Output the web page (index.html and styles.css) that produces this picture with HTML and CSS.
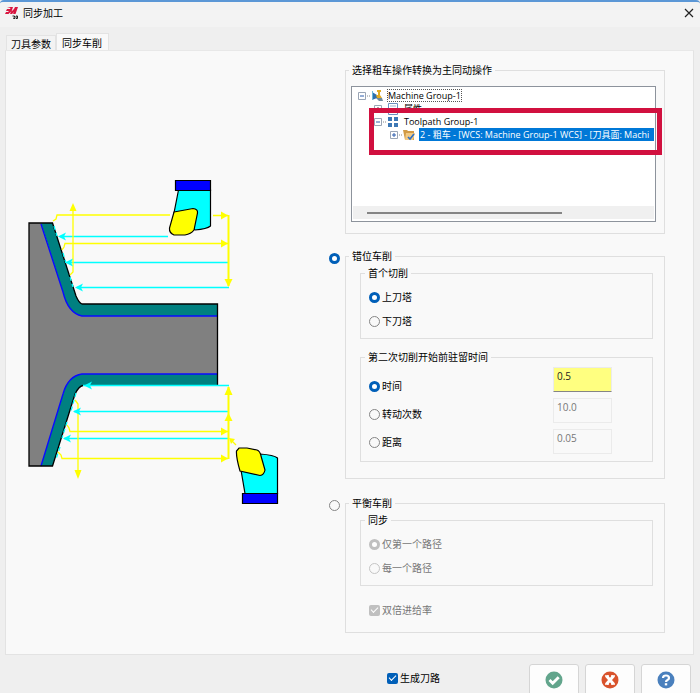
FILE: index.html
```html
<!DOCTYPE html>
<html lang="zh-CN">
<head>
<meta charset="utf-8">
<title>同步加工</title>
<link rel="stylesheet" href="styles.css">
</head>
<body>
<div class="window">
  <header class="titlebar">
    <svg class="logo" width="14" height="14" viewBox="0 0 14 14" aria-hidden="true">
      <path d="M2 1h6L6.500 5.500 9 3l1-2h3L10.500 8H8l1-2-2 2H5l1-2.500L3.500 8H0l1-2h2l1-1H1l1-2h3l.5-1z" fill="#d9153f"/>
      <path d="M7.500 10h2v1l-1 1.500h1.500M11 10h1.500v2.500H11z" fill="none" stroke="#222" stroke-width="1"/>
    </svg>
    <h1 class="title">同步加工</h1>
    <button class="close" type="button" aria-label="关闭">
      <svg width="10" height="10" viewBox="0 0 10 10"><path d="M1 1l8 8M9 1l-8 8" stroke="#222" stroke-width="1.200"/></svg>
    </button>
  </header>

  <nav class="tabs" role="tablist">
    <button class="tab" type="button" role="tab">刀具参数</button>
    <button class="tab tab-active" type="button" role="tab" aria-selected="true">同步车削</button>
  </nav>

  <main class="panel">
    <svg class="diagram" width="290" height="330" viewBox="0 175 290 330" aria-hidden="true">
      <path d="M29 223H41L63 292Q68 313 82 316H217V374H82Q68 376 63 394L41 466H29z" fill="#808080"/>
      <path d="M41 223H52.500L76 296Q79 303 82 304H217V316H82Q68 313 63 292z" fill="#008080"/>
      <path d="M41 466H52.500L75 394Q79 386 83 385.500H217V374H82Q68 376 63 394z" fill="#008080"/>
      <path d="M41 224L63 292Q68 313 82 316H217M217 374H82Q68 376 63 394L41 466" fill="none" stroke="#0a0aff" stroke-width="1.400"/>
      <path d="M83 385.500Q79 386 75 394L52.500 466H29V223H52.500L76 296Q79 303 82 304H217.500V385" fill="none" stroke="#000" stroke-width="1.300"/>
      <g fill="none" stroke="#0ff" stroke-width="1.300">
        <path d="M60 236.500H168M68 262.500H229M77 287.500H229M83 385.500H229M74 411.500H229M64 438.500H229"/>
        <path stroke-dasharray="4 3" d="M54 226l3 10M63 253l3 10M70 277l3 10M76 393l-5 18M67 422l-5 16M60 447l-4 12"/>
      </g>
      <g fill="none" stroke="#ff0" stroke-width="1.300">
        <path d="M53 221l3-2 1-4H170M213 215.500H228M62 250l2-3 1-3.500H228M70 275l3-3V207"/>
        <path d="M75 400l3 4V472M67 425l2 3 1 3.500H228M58 452l3 3 1 3.500H228M236 445l-5-5"/>
      </g>
      <path d="M228.500 215V286M228.500 387V459" stroke="#ff0" stroke-width="2"/>
      <g fill="#ff0">
        <path d="M228 215.500l-7-4v8zM228 243.500l-7-4v8zM228 431.500l-7-4v8zM228 458.500l-7-4v8z"/>
        <path d="M73 203l-3.500 8h7zM78 479l-3.500-9h7zM228.500 287l-4-8h8zM228.500 386l-4 9h8zM228.500 413l-4 8h8zM229 438l6 1-4 5z"/>
      </g>
      <path d="M58 236.500l8-4-2 4 2 4zM65 262.500l8-4-2 4 2 4zM75 287.500l8-4-2 4 2 4zM84 385.500l8-4-2 4 2 4zM73 411.500l8-4-2 4 2 4zM63 438.500l8-4-2 4 2 4z" fill="#0ff"/>
      <g stroke="#000" stroke-width="1.200">
        <path d="M178.500 190H210.500V226Q207 229 195 230L174 213z" fill="#0ff"/>
        <path d="M175.500 180.500H210.500V190.500H175.500z" fill="#00f"/>
        <path d="M174 212L193 208.500Q198 209 197.500 213L194 230Q191 234 185 235H174Q169 233 169.500 228z" fill="#ff0"/>
        <path d="M260 454Q274 455 277.500 458V493.500H245L241 470z" fill="#0ff"/>
        <path d="M242.500 493.500H277.500V503.500H242.500z" fill="#00f"/>
        <path d="M239 448H247L257 450Q260 451 261 456L265 470Q264 475 260 475.500L240 471Q236 457 236.500 451z" fill="#ff0"/>
      </g>
    </svg>

    <form class="options">
      <fieldset class="group source">
        <legend>选择粗车操作转换为主同动操作</legend>
        <div class="tree-frame">
          <div class="tree" role="tree">
            <div class="row level-1" role="treeitem">
              <svg class="node" width="29" height="13" viewBox="0 0 29 13" aria-hidden="true">
                <path d="M.5 3.500h7v7h-7z" fill="#fff" stroke="#9aa5b5"/><path d="M2 7h4" stroke="#2f5fae"/><path d="M9 7h4" stroke="#888" stroke-dasharray="1 1"/>
                <path d="M14 3v8l5-2V6z" fill="#2f6fae"/><path d="M18 6h2V3h-1V1h4v2h-1v3l2 3h-5z" fill="#e0ab25"/><path d="M18 9h6l1 3h-4z" fill="#6d8a9f"/><path d="M14.500 2v9" stroke="#68b9dc"/>
              </svg>
              <span class="text focus">Machine Group-1</span>
            </div>
            <div class="row level-2" role="treeitem">
              <svg class="node" width="29" height="13" viewBox="0 0 29 13" aria-hidden="true">
                <path d="M.5 3.500h7v7h-7z" fill="#fff" stroke="#9aa5b5"/><path d="M2 7h4M4 5v4" stroke="#555"/><path d="M9 7h4" stroke="#888" stroke-dasharray="1 1"/>
                <path d="M14.500 1.500h9v11h-9z" fill="#fff" stroke="#6b90bf"/><path d="M16 4h6M16 7h6M16 10h6" stroke="#9ab2cf"/>
              </svg>
              <span class="text">属性</span>
            </div>
            <div class="row level-2" role="treeitem">
              <svg class="node" width="29" height="13" viewBox="0 0 29 13" aria-hidden="true">
                <path d="M.5 3.500h7v7h-7z" fill="#fff" stroke="#9aa5b5"/><path d="M2 7h4" stroke="#2f5fae"/><path d="M9 7h4" stroke="#888" stroke-dasharray="1 1"/>
                <path d="M14 2h4v4h-4zM20 2h4v4h-4zM14 8h4v4h-4zM20 8h4v4h-4z" fill="#3d78b5"/>
              </svg>
              <span class="text">Toolpath Group-1</span>
            </div>
            <div class="row level-3" role="treeitem" aria-selected="true">
              <svg class="node" width="29" height="13" viewBox="0 0 29 13" aria-hidden="true">
                <path d="M.5 3.500h7v7h-7z" fill="#fff" stroke="#9aa5b5"/><path d="M2 7h4M4 5v4" stroke="#2f5fae"/><path d="M9 7h4" stroke="#888" stroke-dasharray="1 1"/>
                <path d="M13 2h4l1 1h6v9h-9z" fill="#d29b45"/><path d="M16 5h9l-2 7h-8z" fill="#f2c982"/><path d="M18 9l2 2 4-5" fill="none" stroke="#2f6fc4" stroke-width="1.600"/>
              </svg>
              <span class="text selected">2 - 粗车 - [WCS: Machine Group-1 WCS] - [刀具面: Machi</span>
            </div>
            <div class="scrollbar"><div class="thumb"></div></div>
          </div>
          <div class="highlight"></div>
        </div>
      </fieldset>

      <div class="mode">
        <input class="radio mode-radio" type="radio" name="mode" id="staggered" checked>
        <fieldset class="group">
          <legend><label for="staggered">错位车削</label></legend>
          <fieldset class="group inner">
            <legend>首个切削</legend>
            <label class="choice"><input class="radio" type="radio" name="turret" checked>上刀塔</label>
            <label class="choice"><input class="radio" type="radio" name="turret">下刀塔</label>
          </fieldset>
          <fieldset class="group inner">
            <legend>第二次切削开始前驻留时间</legend>
            <div class="dwell">
              <div class="dwell-kinds">
                <label class="choice"><input class="radio" type="radio" name="dwell" checked>时间</label>
                <label class="choice"><input class="radio" type="radio" name="dwell">转动次数</label>
                <label class="choice"><input class="radio" type="radio" name="dwell">距离</label>
              </div>
              <div class="dwell-values">
                <input class="value value-active" type="text" value="0.5" aria-label="时间">
                <input class="value" type="text" value="10.0" aria-label="转动次数" disabled>
                <input class="value" type="text" value="0.05" aria-label="距离" disabled>
              </div>
            </div>
          </fieldset>
        </fieldset>
      </div>

      <div class="mode">
        <input class="radio mode-radio" type="radio" name="mode" id="balanced">
        <fieldset class="group balanced">
          <legend><label for="balanced">平衡车削</label></legend>
          <fieldset class="group inner">
            <legend>同步</legend>
            <label class="choice off"><input class="radio" type="radio" name="sync" checked disabled>仅第一个路径</label>
            <label class="choice off"><input class="radio" type="radio" name="sync" disabled>每一个路径</label>
          </fieldset>
          <label class="choice off double"><input class="check" type="checkbox" checked disabled>双倍进给率</label>
        </fieldset>
      </div>
    </form>
  </main>

  <footer class="footer">
    <label class="choice generate"><input class="check" type="checkbox" checked>生成刀路</label>
    <button class="action" type="button" aria-label="确定">
      <svg width="18" height="18" viewBox="0 0 18 18"><circle cx="9" cy="9" r="8.500" fill="#62a58c"/><path d="M4.500 9l3.200 3.200 6-6" fill="none" stroke="#fff" stroke-width="2.800"/></svg>
    </button>
    <button class="action" type="button" aria-label="取消">
      <svg width="18" height="18" viewBox="0 0 18 18"><circle cx="9" cy="9" r="8.500" fill="#d9532c"/><path d="M5.500 5l7 8M12.500 5l-7 8" stroke="#fff" stroke-width="3"/><path d="M4 5h4M10 5h4M4 13h4M10 13h4" stroke="#fff" stroke-width="1.500"/></svg>
    </button>
    <button class="action" type="button" aria-label="帮助">
      <svg width="18" height="18" viewBox="0 0 18 18"><circle cx="9" cy="9" r="8.500" fill="#4a80bd"/><path d="M6 7Q6 4.500 9 4.500T12 7Q12 8.300 10.500 9T9 11" fill="none" stroke="#fff" stroke-width="2.200"/><path d="M7.800 12.200h2.400v2.200H7.800z" fill="#fff"/></svg>
    </button>
  </footer>
</div>
</body>
</html>
```
FILE: styles.css
```css
* {
  box-sizing: border-box;
}

body {
  margin: 0;
  background: #efefef;
  color: #000;
  font: 10px/12px "Open Sans", "Noto Sans CJK SC", sans-serif;
}

button,
input {
  margin: 0;
  padding: 0;
  border: 0;
  background: none;
  color: inherit;
  font: inherit;
}

svg {
  display: block;
}

.window {
  display: flex;
  flex-direction: column;
  height: 100vh;
  overflow: hidden;
  border-top: 2px solid #5b97d6;
  border-radius: 4px 4px 0 0;
}

.titlebar {
  display: flex;
  align-items: center;
  flex: none;
  gap: 4px;
  height: 25px;
  padding: 0 6px 3px 5px;
  background: #f3f3f3;
}

.title {
  flex: 1;
  margin: 0;
  font-size: 10px;
  font-weight: 400;
}

.tabs {
  display: flex;
  align-items: flex-end;
  flex: none;
  height: 23px;
  padding-left: 6px;
}

.tab {
  height: 15px;
  padding: 2px 4px 0;
  border: 1px solid #e3e3e3;
  border-bottom: 0;
  background: #f3f3f3;
}

.tab-active {
  height: 17px;
  padding: 1px 6px 0 5px;
  background: #f9f9f9;
}

.panel {
  display: grid;
  grid-template-columns: 322px minmax(0, 1fr);
  flex: none;
  margin: 0 6px 0 5px;
  padding: 13px 28px 21px 0;
  border: 1px solid #e3e3e3;
  border-top-color: #e8e8e8;
  background: #f9f9f9;
}

.diagram {
  margin: 111px 0 0 -6px;
}

.options {
  display: flex;
  flex-direction: column;
  gap: 16px;
}

.group {
  flex: 1;
  min-width: 0;
  margin: 0;
  padding: 5px 11px 16px 14px;
  border: 1px solid #dfdfdf;
}

.group legend {
  height: 12px;
  margin-left: -11px;
  padding: 0 3px;
}

.source {
  margin-left: 17px;
  padding: 10px 8px 11px 5px;
}

.source legend {
  margin-left: -2px;
}

.inner {
  padding: 6px 40px 5px 8px;
}

.inner legend {
  margin-left: -4px;
}

.inner + .inner {
  margin-top: 12px;
}

.balanced {
  padding-bottom: 10px;
}

.tree-frame {
  position: relative;
}

.tree {
  height: 136px;
  padding: 2px 1px 1px 6px;
  overflow: hidden;
  display: flex;
  flex-direction: column;
  border: 1px solid #8d939c;
  background: #fff;
}

.row {
  display: flex;
  flex: none;
  height: 13px;
  font-size: 9px;
  line-height: 13px;
  white-space: nowrap;
}

.level-2 {
  padding-left: 16px;
}

.level-3 {
  padding-left: 32px;
}

.node {
  flex: none;
}

.text {
  padding: 0 1px;
}

.focus {
  outline: 1px dotted #555;
  outline-offset: -1px;
}

.selected {
  flex: 1;
  background: #0078d7;
  color: #fff;
}

.scrollbar {
  display: flex;
  align-items: center;
  flex: none;
  height: 13px;
  margin: auto 0 1px -5px;
  padding-left: 14px;
  background: #f0f0f0;
}

.thumb {
  width: 68%;
  height: 2px;
  background: #858585;
}

.highlight {
  position: absolute;
  top: 22px;
  right: -6px;
  left: 18px;
  height: 47px;
  border: 5px solid #d1103f;
}

.mode {
  display: flex;
  align-items: flex-start;
  gap: 5px;
}

.mode + .mode {
  margin-top: 2px;
}

.mode-radio {
  margin: 3px 0 0 1px;
}

.choice {
  display: flex;
  align-items: center;
  gap: 2px;
  height: 24px;
}

.off {
  color: #777;
}

.double {
  margin: 12px 0 0 9px;
}

.radio,
.check {
  flex: none;
  width: 11px;
  height: 11px;
  appearance: none;
}

.radio {
  border: 1px solid #858585;
  border-radius: 50%;
  background: #f9f9f9;
}

.radio:checked {
  border: 3px solid #005fb8;
  background: #fff;
}

.radio:checked:disabled {
  border-color: #c0c0c0;
}

.radio:disabled {
  border-color: #c5c5c5;
}

.check {
  display: grid;
  place-items: center;
  border-radius: 2px;
  background: #005fb8;
}

.check::before {
  width: 6px;
  height: 3px;
  margin-bottom: 2px;
  border: solid #fff;
  border-width: 0 0 1px 1px;
  content: "";
  transform: rotate(-45deg);
}

.check:disabled {
  background: #c0c0c0;
}

.dwell {
  display: flex;
  justify-content: space-between;
  margin-top: -2px;
  padding-bottom: 2px;
}

.dwell-kinds {
  display: grid;
  gap: 4px;
  padding-top: 7px;
}

.dwell-values {
  display: grid;
  align-content: start;
  gap: 6px;
}

.value {
  width: 59px;
  height: 25px;
  padding: 0 3px 8px;
  border: 1px solid #ebebeb;
  color: #777;
}

.value-active {
  border-bottom-color: #858585;
  background: #ffff80;
  color: #222;
}

.footer {
  display: flex;
  gap: 6px;
  padding: 9px 9px 0;
}

.generate {
  flex: 1;
  margin-left: 378px;
  height: 28px;
}

.action {
  display: grid;
  flex: none;
  place-items: center;
  width: 50px;
  height: 32px;
  border: 1px solid #d5d5d5;
  border-radius: 3px;
  background: #fdfdfd;
}
```
